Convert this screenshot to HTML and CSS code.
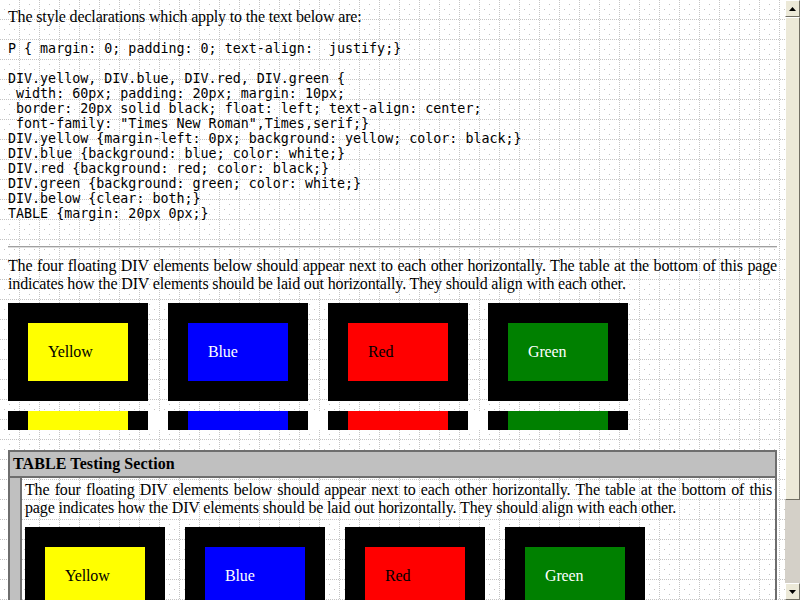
FILE: index.html
```html
<!DOCTYPE html>
<html>
<head>
<meta charset="utf-8">
<title>CSS1 Test Suite: float</title>
<link rel="stylesheet" href="styles.css">
</head>
<body>
<div class="window">
  <div class="page">
    <p class="intro">The style declarations which apply to the text below are:</p>
    <pre class="css">P { margin: 0; padding: 0; text-align:  justify;}

DIV.yellow, DIV.blue, DIV.red, DIV.green {
 width: 60px; padding: 20px; margin: 10px;
 border: 20px solid black; float: left; text-align: center;
 font-family: "Times New Roman",Times,serif;}
DIV.yellow {margin-left: 0px; background: yellow; color: black;}
DIV.blue {background: blue; color: white;}
DIV.red {background: red; color: black;}
DIV.green {background: green; color: white;}
DIV.below {clear: both;}
TABLE {margin: 20px 0px;}</pre>
    <hr class="rule">
    <div class="test">
      <p class="just">The four floating DIV elements below should appear next to each other horizontally. The table at the bottom of this page indicates how the DIV elements should be laid out horizontally. They should align with each other.</p>
      <div class="boxes">
        <div class="box yellow">Yellow</div>
        <div class="box blue">Blue</div>
        <div class="box red">Red</div>
        <div class="box green">Green</div>
      </div>
      <div class="bars">
        <span class="seg edge"></span><span class="seg fill yellow"></span><span class="seg edge"></span><span class="seg gap"></span>
        <span class="seg edge"></span><span class="seg fill blue"></span><span class="seg edge"></span><span class="seg gap"></span>
        <span class="seg edge"></span><span class="seg fill red"></span><span class="seg edge"></span><span class="seg gap"></span>
        <span class="seg edge"></span><span class="seg fill green"></span><span class="seg edge"></span>
      </div>
    </div>
    <table class="testing">
      <tr>
        <td class="head" colspan="2"><strong>TABLE Testing Section</strong></td>
      </tr>
      <tr>
        <td class="side">&nbsp;</td>
        <td class="cell">
          <p class="just">The four floating DIV elements below should appear next to each other horizontally. The table at the bottom of this page indicates how the DIV elements should be laid out horizontally. They should align with each other.</p>
          <div class="boxes">
            <div class="box yellow">Yellow</div>
            <div class="box blue">Blue</div>
            <div class="box red">Red</div>
            <div class="box green">Green</div>
          </div>
        </td>
      </tr>
    </table>
  </div>
  <div class="scrollbar">
    <div class="sb-btn"><svg width="7" height="4" viewBox="0 0 7 4"><polygon points="3.5,0 7,4 0,4" fill="#000"/></svg></div>
    <div class="sb-thumb"></div>
    <div class="sb-track"></div>
    <div class="sb-btn"><svg width="7" height="4" viewBox="0 0 7 4"><polygon points="0,0 7,0 3.5,4" fill="#000"/></svg></div>
  </div>
</div>
</body>
</html>
```

FILE: styles.css
```css
html, body {
  margin: 0;
  padding: 0;
}

body {
  width: 800px;
  height: 600px;
  overflow: hidden;
  font-family: "Liberation Serif", "Times New Roman", Times, serif;
  font-size: 16px;
  line-height: 18px;
  letter-spacing: -0.15px;
  color: #000;
}

.window {
  display: flex;
  width: 800px;
  height: 600px;
  overflow: hidden;
}

.page {
  flex: 1;
  min-width: 0;
  padding: 8px;
  overflow: hidden;
  background-color: #fff;
  background-image:
    conic-gradient(at 1px 1px, transparent 75%, #c4c4c4 0),
    conic-gradient(at 1px 1px, transparent 75%, #c4c4c4 0),
    conic-gradient(at 1px 1px, transparent 75%, #c4c4c4 0),
    conic-gradient(at 1px 1px, transparent 75%, #c4c4c4 0);
  background-size: 20px 2px, 2px 20px, 20px 10px, 10px 20px;
  background-position: 19px 0, 0 19px, 9px 4px, 4px 9px;
}

.intro {
  margin: 0;
}

.css {
  margin: 15px 0 25px;
  font-family: "DejaVu Sans Mono", "Liberation Mono", monospace;
  font-size: 13.33px;
  line-height: 15px;
  letter-spacing: 0;
  white-space: pre;
}

.rule {
  height: 0;
  margin: 0 0 9px;
  border: 0;
  border-top: 1px solid #a0a0a0;
  border-bottom: 1px solid #dcdcdc;
}

.just {
  margin: 0;
  text-align: justify;
}

.boxes {
  display: flex;
  gap: 20px;
  margin-top: 10px;
}

.box {
  width: 60px;
  padding: 20px;
  border: 20px solid #000;
  text-align: left;
  font-family: "Liberation Serif", "Times New Roman", Times, serif;
}

.yellow { background: #ff0; color: #000; }
.blue { background: #00f; color: #fff; }
.red { background: #f00; color: #000; }
.green { background: #008000; color: #fff; }

.bars {
  display: flex;
  height: 19px;
  margin-top: 10px;
}

.seg {
  display: block;
  width: 20px;
}

.seg.edge { background: #000; }
.seg.gap { background: #fff; }
.seg.fill { width: 100px; }

.testing {
  width: 100%;
  margin: 20px 0 0;
  border-collapse: separate;
  border-spacing: 0;
  border: 1px solid #6e6e6e;
}

.testing td {
  padding: 3px;
  border: 1px solid #6e6e6e;
  vertical-align: top;
}

.testing .head {
  background: #c0c0c0;
  text-align: left;
  letter-spacing: 0.1px;
}

.testing .side {
  background: #c0c0c0;
  width: 4px;
}

.testing .cell {
  background: transparent;
}

.scrollbar {
  width: 15px;
  display: flex;
  flex-direction: column;
  background: #d4d0c8;
}

.sb-btn {
  box-sizing: border-box;
  height: 17px;
  display: flex;
  align-items: center;
  justify-content: center;
  background: #ece9d8;
  border: 1px solid;
  border-color: #fff #716f64 #716f64 #fff;
}

.sb-thumb {
  box-sizing: border-box;
  height: 483px;
  background: #ece9d8;
  border: 1px solid;
  border-color: #fff #716f64 #716f64 #fff;
}

.sb-track {
  flex: 1;
}
```
